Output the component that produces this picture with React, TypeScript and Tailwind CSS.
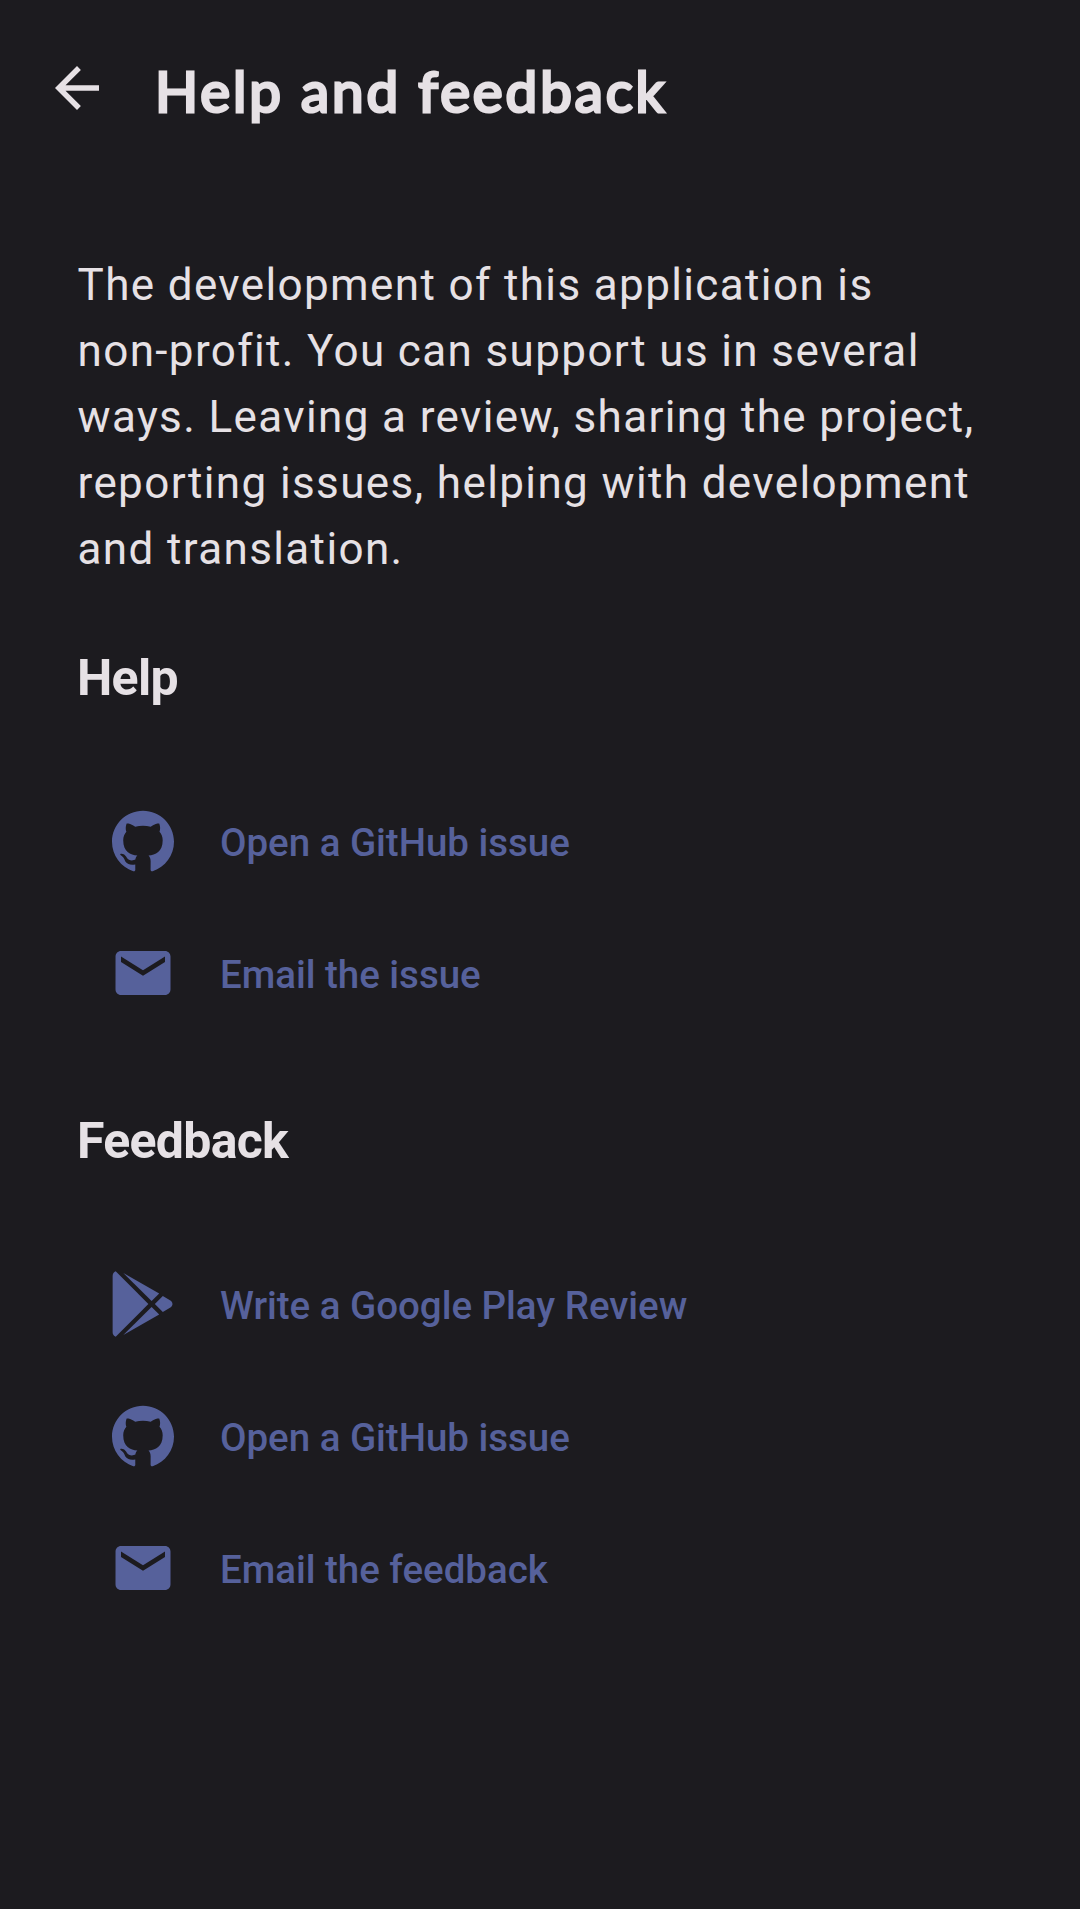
import React from "react";

const BackArrow = () => (
  <svg className="size-[66px] shrink-0" viewBox="0 0 24 24" fill="currentColor">
    <path d="M20 11H7.83l5.59-5.59L12 4l-8 8 8 8 1.41-1.41L7.83 13H20v-2z" />
  </svg>
);

const GitHub = () => (
  <svg className="size-[62px]" viewBox="0 0 24 24" fill="currentColor">
    <path d="M12 .297c-6.63 0-12 5.373-12 12 0 5.303 3.438 9.8 8.205 11.385.6.113.82-.258.82-.577 0-.285-.01-1.04-.015-2.04-3.338.724-4.042-1.61-4.042-1.61C4.422 18.07 3.633 17.7 3.633 17.7c-1.087-.744.084-.729.084-.729 1.205.084 1.838 1.236 1.838 1.236 1.07 1.835 2.809 1.305 3.495.998.108-.776.417-1.305.76-1.605-2.665-.3-5.466-1.332-5.466-5.93 0-1.31.465-2.38 1.235-3.22-.135-.303-.54-1.523.105-3.176 0 0 1.005-.322 3.3 1.23.96-.267 1.98-.399 3-.405 1.02.006 2.04.138 3 .405 2.28-1.552 3.285-1.23 3.285-1.23.645 1.653.24 2.873.12 3.176.765.84 1.23 1.91 1.23 3.22 0 4.61-2.805 5.625-5.475 5.92.42.36.81 1.096.81 2.22 0 1.606-.015 2.896-.015 3.286 0 .315.21.69.825.57C20.565 22.092 24 17.592 24 12.297c0-6.627-5.373-12-12-12" />
  </svg>
);

const Mail = () => (
  <svg className="size-[66px]" viewBox="0 0 24 24" fill="currentColor">
    <path d="M20 4H4c-1.1 0-1.99.9-1.99 2L2 18c0 1.1.9 2 2 2h16c1.1 0 2-.9 2-2V6c0-1.1-.9-2-2-2zm0 4l-8 5-8-5V6l8 5 8-5v2z" />
  </svg>
);

const GooglePlay = () => (
  <svg className="size-[66px]" viewBox="0 0 66 66" fill="currentColor">
    <path d="M5.7.2 38.4 33 5.7 65.8C3.8 65 2.6 63.4 2.6 61V5C2.6 2.6 3.8 1 5.7.2Z" />
    <path d="M13.3 2 49.2 22.4 41.6 30Z" />
    <path d="M13.3 64 49.2 43.6 41.6 36Z" />
    <path d="M44.8 33 52.8 25 60 29.2C63.3 31.2 63.3 34.8 60 36.8L52.8 41Z" />
  </svg>
);

const icons = { github: GitHub, mail: Mail, play: GooglePlay };

function Action({ icon, label }: { icon: keyof typeof icons; label: string }) {
  const Icon = icons[icon];
  return (
    <button className="flex h-[132px] items-center gap-11 text-[#56619b]">
      <span className="flex w-[66px] justify-center">
        <Icon />
      </span>
      <span className="pt-1 text-[38.5px] leading-[56px] font-medium tracking-[-0.03px] whitespace-nowrap">{label}</span>
    </button>
  );
}

function Section({ title, children }: { title: string; children: React.ReactNode }) {
  return (
    <section>
      <h2 className="pl-[77px] text-[50px] leading-[66px] font-bold tracking-[-0.7px]">{title}</h2>
      <div className="mt-16 flex flex-col items-start pl-[110px]">{children}</div>
    </section>
  );
}

export default function App() {
  return (
    <main
      className="flex min-h-[1909px] w-[1080px] flex-col bg-[#1c1b1f] text-[#e6e1e5]"
      style={{ fontFamily: "Roboto, sans-serif" }}
    >
      <header className="flex h-[176px] items-center pl-11">
        <BackArrow />
        <h1 className="mt-1 ml-[45px] font-[Lato] text-[56.5px] leading-[80px] font-normal tracking-[2.9px] whitespace-nowrap [-webkit-text-stroke:3px_currentColor] [stroke-linejoin:round]">
          Help and feedback
        </h1>
      </header>
      <p className="mt-[76px] ml-[77.5px] w-[926px] text-[44px] leading-[66px] tracking-[1.375px]">
        The development of this application is
        <br />
        non-profit. You can support us in several ways. Leaving a review, sharing the project, reporting issues,
        helping with development and translation.
      </p>
      <div className="mt-[63px] flex flex-col gap-[69px]">
        <Section title="Help">
          <Action icon="github" label="Open a GitHub issue" />
          <Action icon="mail" label="Email the issue" />
        </Section>
        <Section title="Feedback">
          <Action icon="play" label="Write a Google Play Review" />
          <Action icon="github" label="Open a GitHub issue" />
          <Action icon="mail" label="Email the feedback" />
        </Section>
      </div>
    </main>
  );
}
